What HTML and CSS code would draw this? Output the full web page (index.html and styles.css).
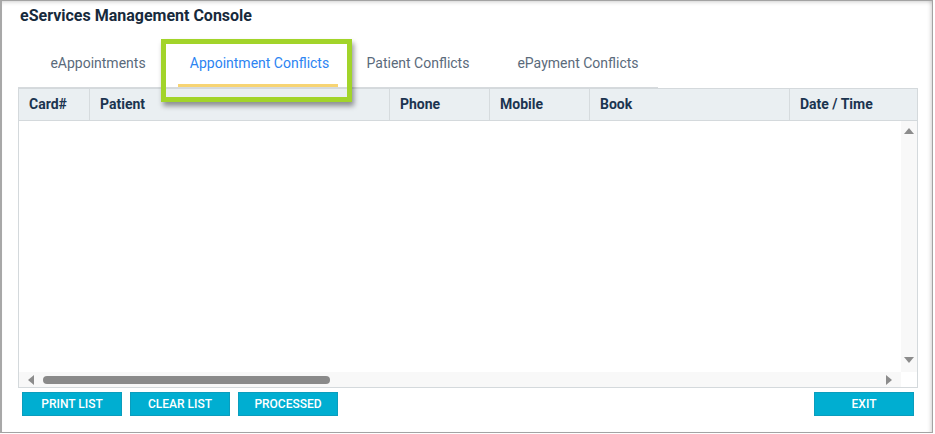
FILE: index.html
```html
<!DOCTYPE html>
<html>
<head>
<meta charset="utf-8">
<link rel="stylesheet" href="styles.css">
</head>
<body>
<div class="window">
  <div class="title">eServices Management Console</div>
  <div class="tabs">
    <div class="tab">eAppointments</div>
    <div class="tab active">Appointment Conflicts</div>
    <div class="tab">Patient Conflicts</div>
    <div class="tab">ePayment Conflicts</div>
  </div>
  <div class="grid">
    <div class="head">
      <div class="th">Card#</div>
      <div class="th">Patient</div>
      <div class="th">Phone</div>
      <div class="th">Mobile</div>
      <div class="th">Book</div>
      <div class="th last">Date / Time</div>
    </div>
    <div class="body">
      <div class="rows"></div>
      <div class="vscroll">
        <span class="arr up"></span>
        <span class="arr down"></span>
      </div>
    </div>
    <div class="hscroll">
      <span class="arr left"></span>
      <span class="thumb"></span>
      <span class="spacer"></span>
      <span class="arr right"></span>
      <span class="corner"></span>
    </div>
  </div>
  <div class="actions">
    <button class="btn">PRINT LIST</button>
    <button class="btn">CLEAR LIST</button>
    <button class="btn">PROCESSED</button>
    <span class="spacer"></span>
    <button class="btn">EXIT</button>
  </div>
  <div class="highlight"></div>
</div>
</body>
</html>
```
FILE: styles.css
```css
* { box-sizing: border-box; }
html, body { margin: 0; padding: 0; background: #fff; }
body { font-family: Roboto, "Liberation Sans", sans-serif; }

.window {
  position: relative;
  width: 933px;
  height: 433px;
  border: 1px solid #a3a3a3;
  border-left: 2px solid #a8a8a8;
  box-shadow: inset 0 4px 4px -3px rgba(0,0,0,0.18), inset -4px 0 4px -3px rgba(0,0,0,0.18);
  display: flex;
  flex-direction: column;
  background: #fff;
}

.title {
  padding: 5px 0 0 18px;
  font-size: 16px;
  line-height: 19px;
  font-weight: 700;
  color: #172a3c;
}

.tabs {
  display: flex;
  margin: 18px 0 0 16px;
  width: 640px;
  border-bottom: 1px solid #d6dadd;
}
.tab {
  width: 160px;
  text-align: center;
  font-size: 14px;
  line-height: 16px;
  color: #5a6a7b;
  padding: 12px 0 13px;
  border-bottom: 3px solid transparent;
}
.tab.active {
  color: #2c84f2;
  border-bottom-color: #f7d473;
  padding-left: 3px;
}

.grid {
  margin: 0 14px 0 16px;
  border: 1px solid #d4d9dc;
  display: flex;
  flex-direction: column;
}
.head {
  display: grid;
  grid-template-columns: 71px 300px 100px 100px 200px 1fr;
  background: #eaeff2;
  border-bottom: 1px solid #d4d9dc;
}
.th {
  height: 31px;
  line-height: 16px;
  padding: 7px 0 0 10px;
  font-size: 14px;
  font-weight: 700;
  color: #1b3450;
  border-right: 1px solid #d6dbde;
}
.th.last { border-right: none; }

.body {
  display: flex;
  height: 251px;
}
.rows { flex: 1; background: #fff; }
.vscroll {
  width: 16px;
  background: #f8f8f8;
  display: flex;
  flex-direction: column;
  align-items: center;
  justify-content: space-between;
  padding: 7px 0 9px;
}
.arr { display: block; width: 0; height: 0; }
.arr.up { border-left: 5px solid transparent; border-right: 5px solid transparent; border-bottom: 6px solid #8c8c8c; }
.arr.down { border-left: 5px solid transparent; border-right: 5px solid transparent; border-top: 6px solid #8c8c8c; }
.arr.left { border-top: 5px solid transparent; border-bottom: 5px solid transparent; border-right: 6px solid #8c8c8c; }
.arr.right { border-top: 5px solid transparent; border-bottom: 5px solid transparent; border-left: 6px solid #8c8c8c; }

.hscroll {
  height: 15px;
  background: #f8f8f8;
  display: flex;
  align-items: center;
  padding-left: 9px;
}
.thumb {
  display: block;
  width: 287px;
  height: 8px;
  margin-left: 9px;
  border-radius: 4px;
  background: #8a8a8a;
}
.spacer { flex: 1; }
.hscroll .arr.right { margin-right: 9px; }
.corner { width: 16px; height: 15px; background: #fff; }

.actions {
  display: flex;
  gap: 8px;
  padding: 4px 18px 0 20px;
}
.btn {
  width: 100px;
  height: 24px;
  padding: 0;
  border: 1px solid #0a9dbd;
  background: #00aed1;
  color: #fff;
  font-family: Roboto, "Liberation Sans", sans-serif;
  font-size: 12px;
  font-weight: 500;
  line-height: 22px;
}

.highlight {
  position: absolute;
  left: 159px;
  top: 38px;
  width: 191px;
  height: 63px;
  border: 5px solid #a2d42a;
  box-shadow: 2px 4px 5px rgba(0,0,0,0.4);
}
```
